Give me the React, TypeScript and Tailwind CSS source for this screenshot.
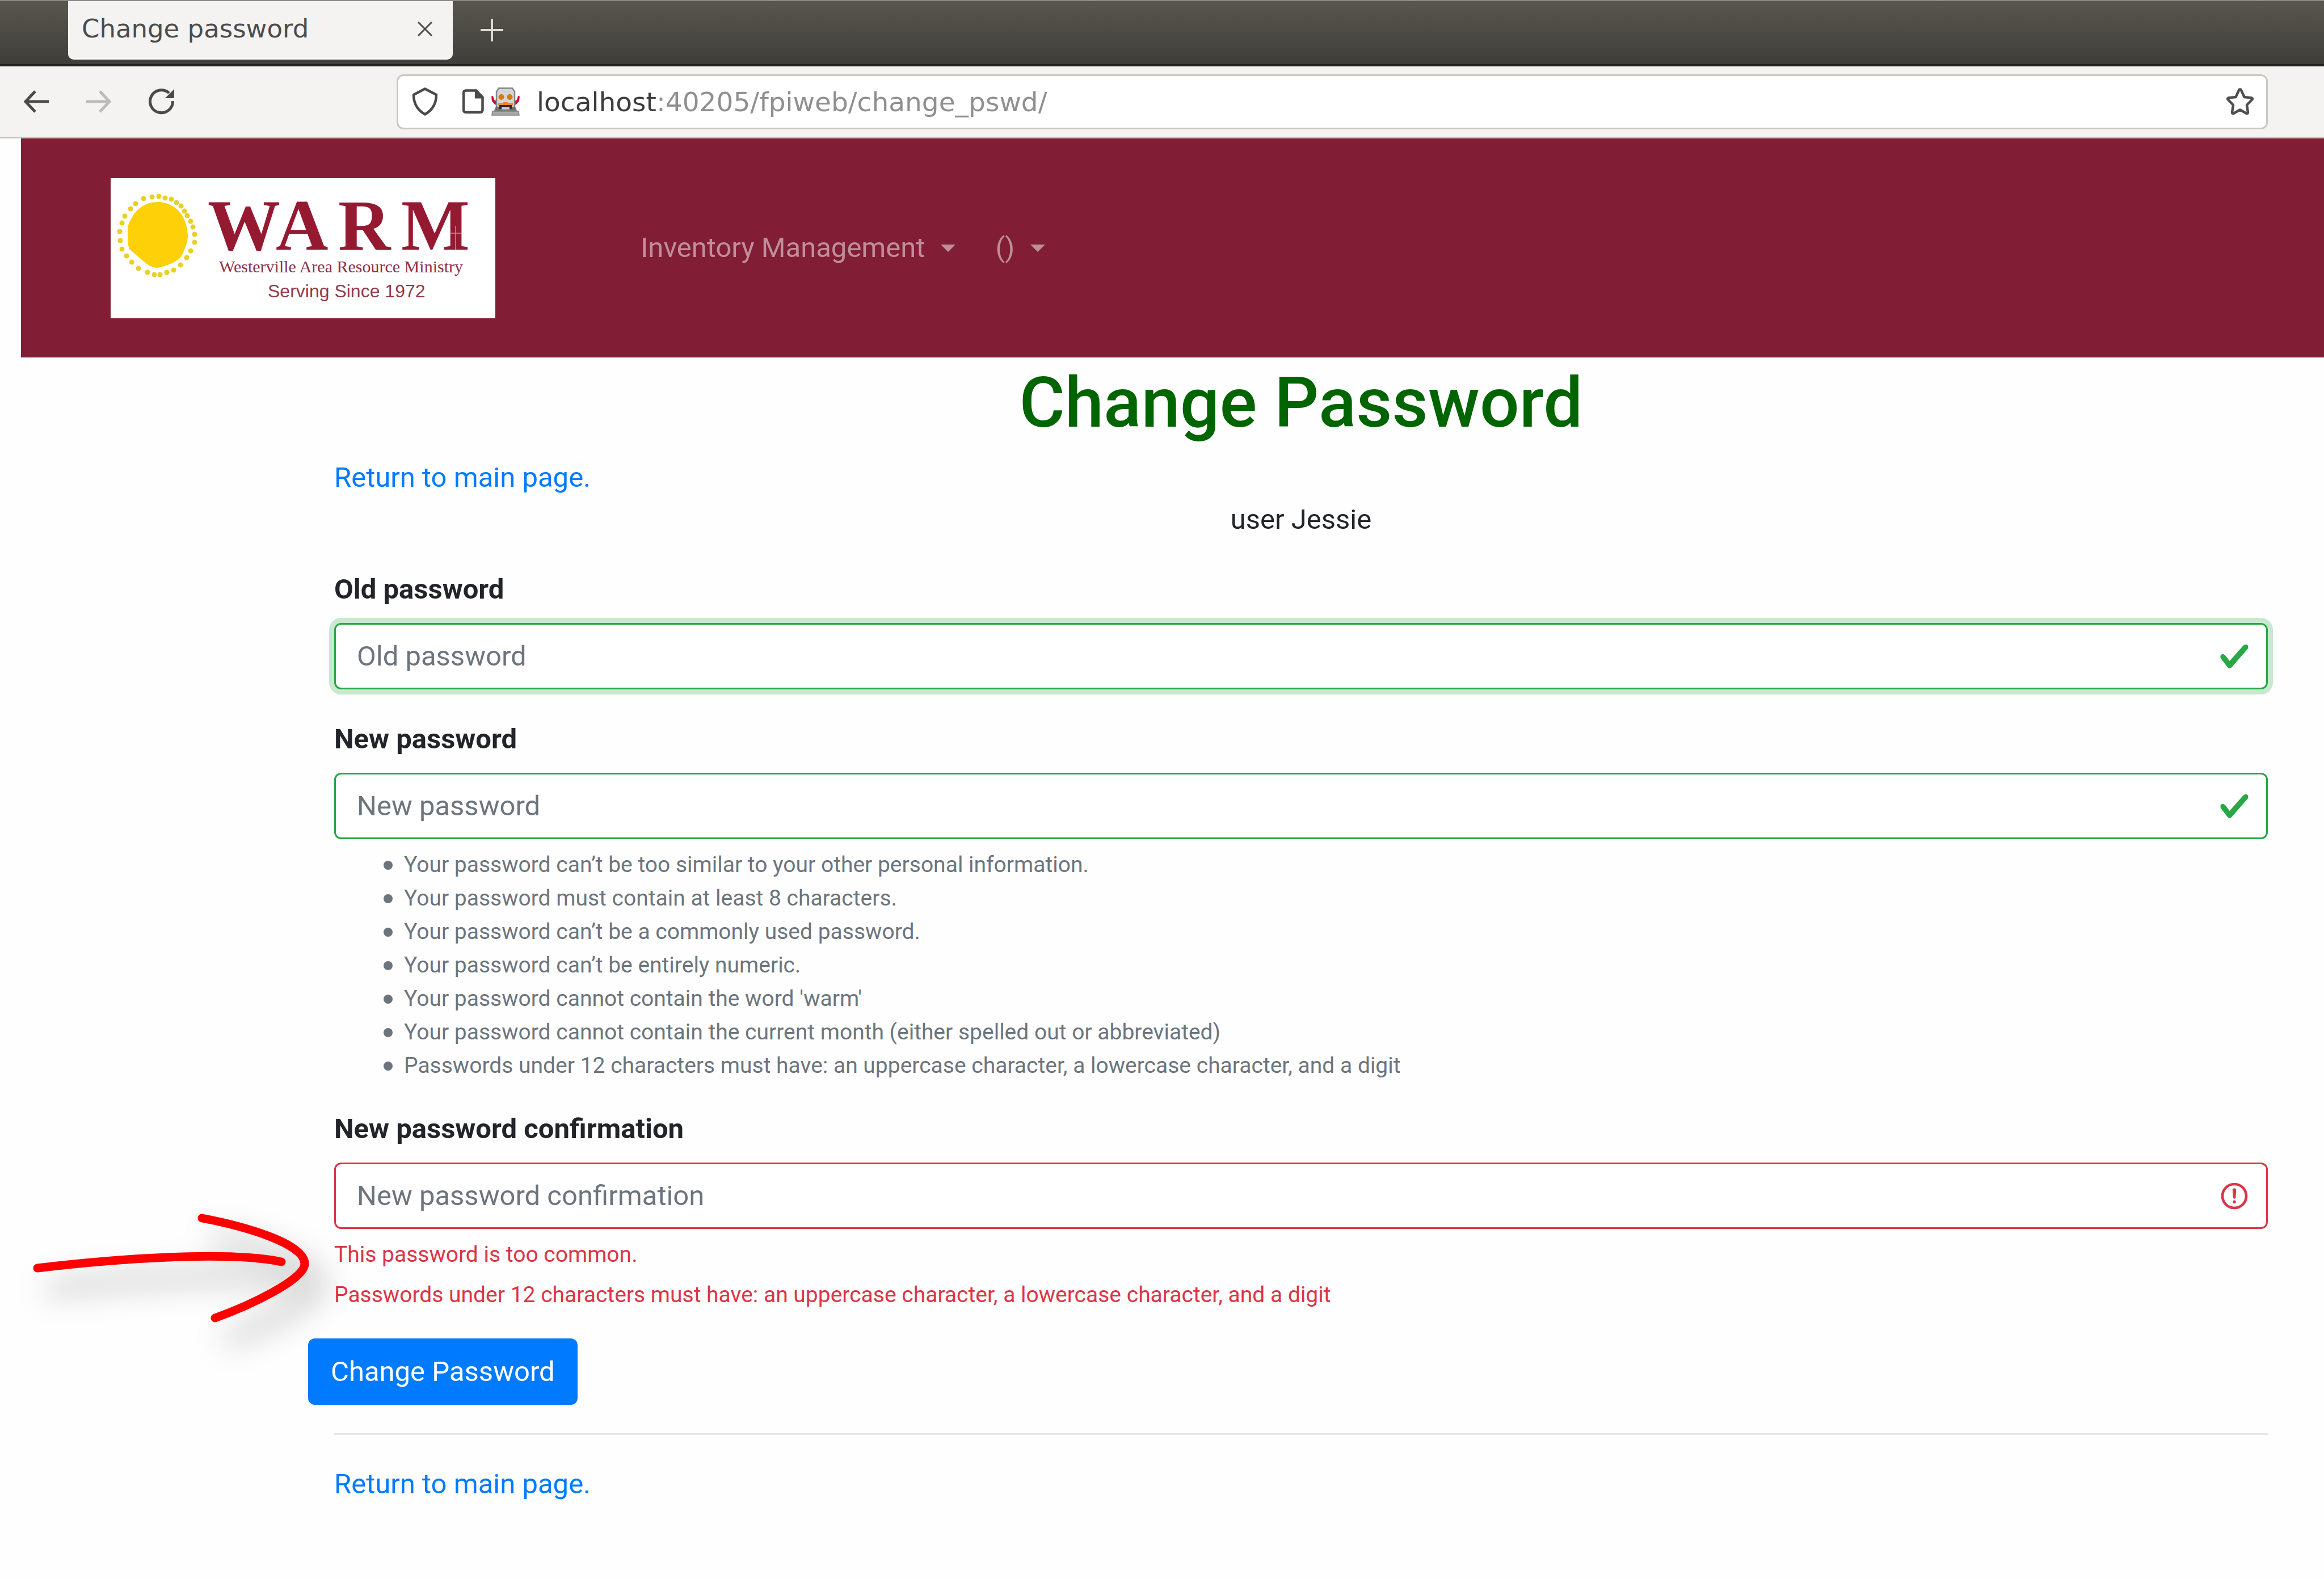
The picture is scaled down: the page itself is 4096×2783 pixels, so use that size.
import type { ReactNode } from "react";

const passwordRules = [
  "Your password can’t be too similar to your other personal information.",
  "Your password must contain at least 8 characters.",
  "Your password can’t be a commonly used password.",
  "Your password can’t be entirely numeric.",
  "Your password cannot contain the word 'warm'",
  "Your password cannot contain the current month (either spelled out or abbreviated)",
  "Passwords under 12 characters must have: an uppercase character, a lowercase character, and a digit",
];

const errors = [
  "This password is too common.",
  "Passwords under 12 characters must have: an uppercase character, a lowercase character, and a digit",
];

// Centres of the beads around the sun in the logo.
const sunBeads: [number, number][] = [
  [73, 33], [85, 32], [96, 35], [107, 37], [116, 43], [124, 49], [130, 58], [135, 66],
  [141, 76], [145, 86], [148, 99], [148, 113], [141, 128], [134, 140], [123, 153], [111, 162],
  [99, 166], [87, 170], [77, 170], [65, 166], [49, 159], [37, 148], [28, 137], [20, 125],
  [17, 110], [16, 94], [20, 79], [25, 67], [35, 54], [44, 45], [58, 36],
];

function BackIcon() {
  return (
    <svg viewBox="0 0 44 40" className="h-[40px] w-[44px]" fill="none" stroke="currentColor" strokeWidth="5">
      <path d="M44 20H4M20 2L3 20l17 18" />
    </svg>
  );
}

function ForwardIcon() {
  return (
    <svg viewBox="0 0 44 40" className="h-[40px] w-[44px]" fill="none" stroke="currentColor" strokeWidth="5">
      <path d="M0 20h40M24 2l17 18-17 18" />
    </svg>
  );
}

function ReloadIcon() {
  return (
    <svg viewBox="0 0 46 46" className="h-[46px] w-[46px]">
      <path d="M42.5 22A20 20 0 1 1 36 8" fill="none" stroke="currentColor" strokeWidth="5" />
      <path d="M45 1v16H29z" fill="currentColor" />
    </svg>
  );
}

function ShieldIcon() {
  return (
    <svg viewBox="0 0 46 50" className="h-[50px] w-[46px]" fill="none" stroke="#4a4a4a" strokeWidth="4.5" strokeLinejoin="round">
      <path d="M23 2.500L43 13c0 14-5 26-20 34.500C8 39 3 27 3 13z" />
    </svg>
  );
}

function PageIcon() {
  return (
    <svg viewBox="0 0 38 44" className="h-[44px] w-[38px]">
      <path d="M6 2.500h18l11.500 12V37a4 4 0 0 1-4 4H6a4 4 0 0 1-4-4V6.500a4 4 0 0 1 4-4z" fill="#fff" stroke="#4a4a4a" strokeWidth="4.500" />
      <path d="M22 1l15 14.500v1H22z" fill="#4a4a4a" />
    </svg>
  );
}

function RobotIcon() {
  return (
    <svg viewBox="0 0 50 50" className="h-[50px] w-[50px]">
      <path d="M0 16l3-1 2 7 4 2v7l-3-1-5-6z M50 16l-3-1-2 7-4 2v7l3-1 5-6z" fill="#d00b35" />
      <path d="M13 1.500h24l4 6V40H9V7.500z" fill="#d3d6d9" stroke="#858789" strokeWidth="2.500" />
      <path d="M8 34h34l3 7H5z" fill="#6f6f6f" />
      <path d="M2 42h46l1 7H1z" fill="#a9a9a9" stroke="#7f7f7f" strokeWidth="1.500" />
      <circle cx="17.500" cy="17" r="5" fill="#d97b06" />
      <circle cx="32.500" cy="17" r="5" fill="#d97b06" />
      <path d="M12 28h26v4H12z" fill="#e88a2c" />
      <path d="M14 31h22v7H14z" fill="#2d2b2a" />
      <path d="M18 35h14v4H18z" fill="#c9cccf" />
      <path d="M21 26h8l-2 5h-4z" fill="#f08020" />
    </svg>
  );
}

function StarIcon() {
  return (
    <svg viewBox="0 0 50 50" className="h-[50px] w-[50px]" fill="none" stroke="#4f4f4f" strokeWidth="4.5" strokeLinejoin="round">
      <path d="M25 3.500q1.500 0 2 1.500L32.500 17l13 1.500q2.500 1 .8 3L37 31l2 13q0 2.500-2.500 2L25 39.500 13.500 46q-2.500.5-2.500-2l2-13-9.300-9.500q-1.700-2 .8-3l13-1.500L23 5q.5-1.500 2-1.500z" />
    </svg>
  );
}

function CheckIcon() {
  return (
    <svg viewBox="0 0 8 8" className="h-[56px] w-[56px]">
      <path
        fill="#28a745"
        d="M2.3 6.73L.6 4.53c-.4-1.04.46-1.4 1.1-.8l1.100 1.400 3.400-3.800c.6-.63 1.600-.27 1.200.7l-4 4.600c-.43.5-.8.4-1.100.1z"
      />
    </svg>
  );
}

function ErrorIcon() {
  return (
    <svg viewBox="0 0 12 12" className="h-[56px] w-[56px]" fill="none" stroke="#dc3545">
      <circle cx="6" cy="6" r="4.5" />
      <path strokeLinejoin="round" d="M5.800 3.600h.4L6 6.500z" />
      <circle cx="6" cy="8.200" r=".6" fill="#dc3545" stroke="none" />
    </svg>
  );
}

function Caret() {
  return (
    <svg viewBox="0 0 26 13" className="h-[13px] w-[26px]">
      <path d="M0 0h26L13 13z" fill="currentColor" />
    </svg>
  );
}

function Logo() {
  return (
    <svg viewBox="0 0 678 247" className="h-[247px] w-[678px] bg-white" role="img" aria-label="WARM Westerville Area Resource Ministry">
      <path
        d="M83 42C101 42 120 52 129 71C133 80 136 92 136 101C136 112 131 125 126 135C122 145 102 154 83 158C70 157 62 150 55 144L33 125C30 117 30 105 30 97C30 82 31 80 42 62C52 50 65 42 83 42z"
        fill="#fdd007"
      />
      {sunBeads.map(([x, y]) => (
        <circle key={`${x}-${y}`} cx={x} cy={y} r="4.500" fill="#e9d022" />
      ))}
      <g fill="#961932" fontFamily="'Liberation Serif', serif" fontWeight="700" fontSize="128">
        <text x="171" y="126">W</text>
        <text x="291" y="126">A</text>
        <text x="401" y="126">R</text>
        <text x="512" y="126">M</text>
      </g>
      <path d="M598 97h20M608 84v42" stroke="#c98a99" strokeWidth="1.500" />
      <text x="191" y="166" fill="#8f2f49" fontFamily="'Liberation Serif', serif" fontSize="30">
        Westerville Area Resource Ministry
      </text>
      <text x="277" y="210" fill="#8f3a4c" fontFamily="'Liberation Sans', sans-serif" fontSize="32">
        Serving Since 1972
      </text>
    </svg>
  );
}

function PointerArrow() {
  return (
    <svg
      viewBox="0 0 640 400"
      className="pointer-events-none absolute top-24 -left-[589px] h-[400px] w-[640px] overflow-visible"
      fill="none"
      stroke="#ff0000"
      strokeWidth="15"
      strokeLinecap="round"
      aria-hidden="true"
    >
      <filter id="arrow-shadow" x="-30%" y="-60%" width="170%" height="240%">
        <feDropShadow dx="24" dy="36" stdDeviation="27" floodColor="#000" floodOpacity="0.36" />
      </filter>
      <g filter="url(#arrow-shadow)">
        <path d="M66 186C200 170 400 155 496 175" />
        <path d="M356 98C430 112 536 142 537 178C538 206 440 252 379 274" />
      </g>
    </svg>
  );
}

function Field({ id, label, state, focused, children }: {
  id: string;
  label: string;
  state: "valid" | "invalid";
  focused?: boolean;
  children?: ReactNode;
}) {
  const border = state === "valid" ? "border-[#28a745]" : "border-[#dc3545]";
  const ring = focused ? "shadow-[0_0_0_9px_rgba(40,167,69,0.25)]" : "";
  return (
    <div className="relative mb-[51px] flex flex-col">
      <label htmlFor={id} className="mb-[22px] font-bold">{label}</label>
      <div className={`flex h-[117px] items-center rounded-[12px] border-[3px] bg-white pr-7 pl-[37px] ${border} ${ring}`}>
        <input
          id={id}
          type="password"
          placeholder={label}
          aria-invalid={state === "invalid"}
          className="h-full min-w-0 flex-1 bg-transparent outline-none placeholder:text-[#6c757d] placeholder:opacity-100"
        />
        {state === "valid" ? <CheckIcon /> : <ErrorIcon />}
      </div>
      {children}
    </div>
  );
}

export default function App() {
  return (
    <div className="flex min-h-screen flex-col bg-[#fefefe] font-['Roboto',sans-serif] text-[49px] leading-[74px] text-[#212529]">
      <div className="flex h-[117px] items-start border-t-2 border-b-4 border-t-[#8b8b87] border-b-[#23221f] bg-linear-to-b from-[#5a564d] via-[#504f48] via-30% to-[#3f3e3a] font-['DejaVu_Sans',sans-serif]">
        <div className="ml-[120px] flex h-[103px] w-[678px] items-center justify-between rounded-b-[10px] border-b-2 border-white bg-[#f4f3f2] pr-9 pb-1 pl-6 text-[45px] leading-[60px] text-[#4c4c4c]">
          <span>Change password</span>
          <button type="button" aria-label="Close tab" className="flex">
            <svg viewBox="0 0 26 26" className="size-[26px]" stroke="#4c4c4c" strokeWidth="3">
              <path d="M1 1l24 24M25 1L1 25" />
            </svg>
          </button>
        </div>
        <button type="button" aria-label="New tab" className="mt-[31px] ml-[49px] flex">
          <svg viewBox="0 0 40 40" className="size-[40px]" stroke="#dfdbd2" strokeWidth="4">
            <path d="M20 0v40M0 20h40" />
          </svg>
        </button>
      </div>

      <div className="flex h-[127px] items-center border-b-[3px] border-[#c6c4be] bg-[#f4f3f1] pr-[99px] pl-[42px] text-[#4a4a4a]">
        <button type="button" aria-label="Back" className="flex"><BackIcon /></button>
        <button type="button" aria-label="Forward" disabled className="ml-[66px] flex text-[#bcbbbb]"><ForwardIcon /></button>
        <button type="button" aria-label="Reload" className="ml-[66px] flex"><ReloadIcon /></button>
        <div className="ml-[391px] flex h-[97px] flex-1 items-center rounded-[12px] border-[3px] border-[#cbc8c2] bg-white pr-[21px] pl-6">
          <ShieldIcon />
          <span className="ml-[43px] flex"><PageIcon /></span>
          <span className="ml-[13px] flex"><RobotIcon /></span>
          <input
            aria-label="Address"
            defaultValue="localhost:40205/fpiweb/change_pswd/"
            className="ml-[30px] h-full min-w-0 flex-1 bg-linear-to-r from-[#3c3c3c] from-[211px] to-[#8f8f8f] to-[211px] bg-clip-text font-['DejaVu_Sans',sans-serif] text-[47px] text-transparent outline-none"
          />
          <button type="button" aria-label="Bookmark this page" className="flex"><StarIcon /></button>
        </div>
      </div>

      <nav className="ml-[37px] flex h-[386px] items-center bg-[#811d34] pl-[158px] text-[#c08e9a]">
        <a href="#home"><Logo /></a>
        <button type="button" className="ml-[256px] flex items-center gap-7">
          Inventory Management <Caret />
        </button>
        <button type="button" className="ml-[70px] flex items-center gap-7">
          () <Caret />
        </button>
      </nav>

      <main className="flex flex-col pt-[6px] pr-[99px] pl-[589px]">
        <h1 className="mb-5 text-center text-[123px] leading-[149px] font-medium text-[#006400]">Change Password</h1>
        <a href="#main" className="self-start text-[#007bff]">Return to main page.</a>
        <p className="mb-[49px] text-center">user Jessie</p>

        <form className="flex flex-col" onSubmit={(event) => event.preventDefault()}>
          <Field id="old-password" label="Old password" state="valid" focused />
          <Field id="new-password" label="New password" state="valid">
            <ul className="mt-4 -mb-[6px] pl-[87px] text-[39px] leading-[59px] text-[#6c757d]">
              {passwordRules.map((rule) => (
                <li key={rule} className="flex items-center gap-5">
                  <span className="size-4 rounded-full bg-[#6c757d]" />
                  {rule}
                </li>
              ))}
            </ul>
          </Field>
          <Field id="confirm-password" label="New password confirmation" state="invalid">
            <div className="mt-1 -mb-1 text-[39px] leading-[59px] text-[#dc3545]">
              {errors.map((error) => (
                <p key={error} className="mt-3">{error}</p>
              ))}
            </div>
            <PointerArrow />
          </Field>
          <button type="submit" className="-ml-[46px] h-[117px] self-start rounded-[12px] bg-[#007bff] px-10 text-white">
            Change Password
          </button>
        </form>

        <hr className="my-[50px] border-t-[3px] border-[#e6e6e6]" />
        <a href="#main" className="self-start text-[#007bff]">Return to main page.</a>
      </main>
    </div>
  );
}
